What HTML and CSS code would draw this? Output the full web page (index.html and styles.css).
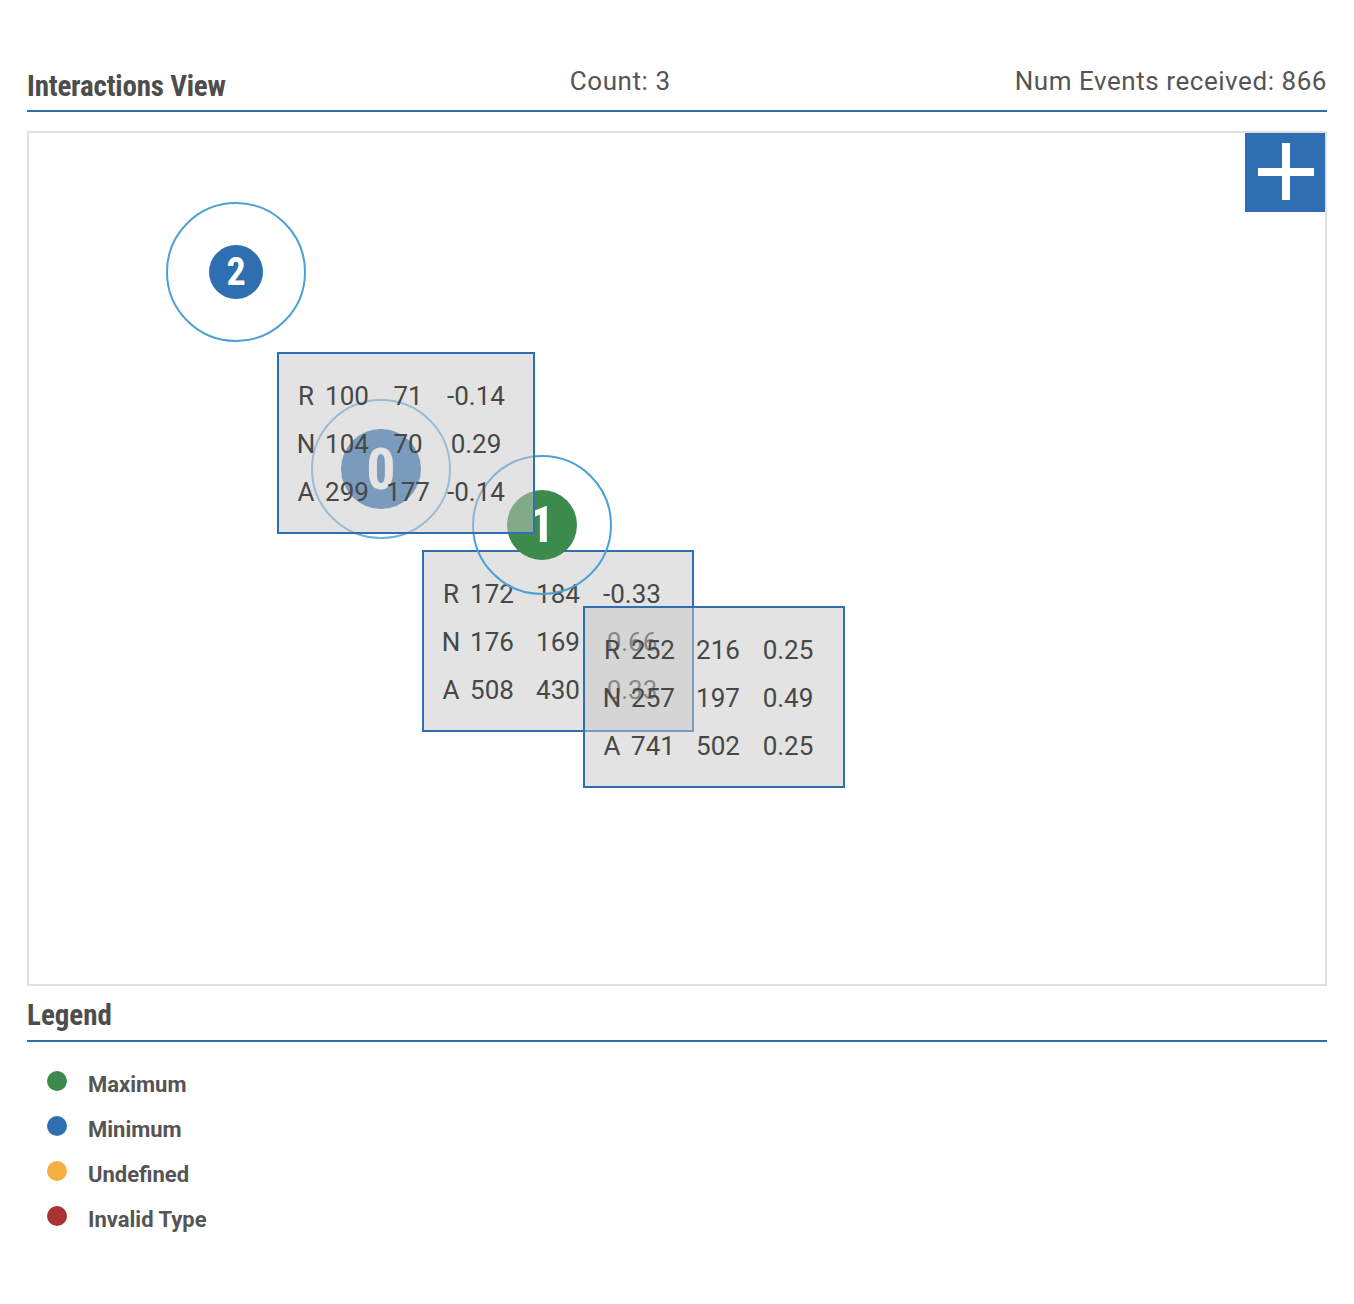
FILE: index.html
```html
<!DOCTYPE html>
<html>
<head>
<meta charset="utf-8">
<link rel="stylesheet" href="styles.css">
</head>
<body>
<div class="page">
  <div class="header">
    <h1 class="title">Interactions View</h1>
    <div class="count">Count: 3</div>
    <div class="events">Num Events received: 866</div>
  </div>

  <div class="canvas">
    <button class="add-btn" aria-label="add">
      <svg width="80" height="79" viewBox="0 0 80 79">
        <rect x="37" y="10" width="8" height="57" fill="#fff"/>
        <rect x="13" y="35" width="56" height="8" fill="#fff"/>
      </svg>
    </button>

    <div class="ring ring-2"></div>
    <div class="dot dot-2">2</div>

    <div class="panel panel-1">
      <span>R</span><span>172</span><span>184</span><span>-0.33</span>
      <span>N</span><span>176</span><span>169</span><span>0.66</span>
      <span>A</span><span>508</span><span>430</span><span>0.33</span>
    </div>

    <div class="ring ring-1"></div>
    <div class="dot dot-1">1</div>

    <div class="ring ring-0"></div>
    <div class="dot dot-0">0</div>

    <div class="panel panel-0">
      <span>R</span><span>100</span><span>71</span><span>-0.14</span>
      <span>N</span><span>104</span><span>70</span><span>0.29</span>
      <span>A</span><span>299</span><span>177</span><span>-0.14</span>
    </div>

    <div class="panel panel-2">
      <span>R</span><span>252</span><span>216</span><span>0.25</span>
      <span>N</span><span>257</span><span>197</span><span>0.49</span>
      <span>A</span><span>741</span><span>502</span><span>0.25</span>
    </div>
  </div>

  <div class="legend-head">
    <h2 class="legend-title">Legend</h2>
  </div>
  <ul class="legend">
    <li><span class="swatch swatch-max"></span>Maximum</li>
    <li><span class="swatch swatch-min"></span>Minimum</li>
    <li><span class="swatch swatch-undef"></span>Undefined</li>
    <li><span class="swatch swatch-invalid"></span>Invalid Type</li>
  </ul>
</div>
</body>
</html>
```
FILE: styles.css
```css
* { box-sizing: border-box; }
body {
  margin: 0;
  background: #fff;
  font-family: Roboto, "Liberation Sans", sans-serif;
  color: #4a4a4a;
}
.page {
  width: 1354px;
  padding: 0 27px;
}
.header {
  display: flex;
  justify-content: space-between;
  align-items: flex-end;
  padding-top: 66px;
  padding-bottom: 6px;
  border-bottom: 2px solid #2f6eb0;
}
.title, .legend-title {
  margin: 0;
  font-family: "Roboto Condensed", "Liberation Sans Narrow", "DejaVu Sans Condensed", Roboto, sans-serif;
  font-stretch: condensed;
  font-weight: bold;
  font-size: 29px;
  color: #4d4d4d;
  line-height: 36px;
}
.title { letter-spacing: -0.2px; }
.count, .events {
  font-size: 26px;
  letter-spacing: 0.55px;
  color: #555;
  line-height: 30px;
  margin-bottom: 8px;
}

.canvas {
  position: relative;
  margin-top: 19px;
  height: 855px;
  border: 2px solid #e0e0e0;
}
.add-btn {
  position: absolute;
  top: 0;
  right: 0;
  width: 80px;
  height: 79px;
  padding: 0;
  border: 0;
  background: #2f6eb0;
  display: block;
}
.add-btn svg { display: block; }

.ring {
  position: absolute;
  width: 140px;
  height: 140px;
  border: 2px solid #4ca0da;
  border-radius: 50%;
}
.ring-2 { left: 137px; top: 69px; }
.ring-0 { left: 282px; top: 266px; border-color: #6eb0de; }
.ring-1 { left: 443px; top: 322px; }

.dot {
  position: absolute;
  border-radius: 50%;
  color: #fff;
  font-weight: bold;
  display: flex;
  align-items: center;
  justify-content: center;
  font-family: "Roboto Condensed", "Liberation Sans Narrow", "DejaVu Sans Condensed", Roboto, sans-serif;
  font-stretch: condensed;
}
.dot-2 {
  left: 180px; top: 112px;
  width: 54px; height: 54px;
  background: #2f6eb0;
  font-size: 38px;
}
.dot-0 {
  left: 312px; top: 296px;
  width: 80px; height: 80px;
  background: #2f6eb0;
  font-size: 58px;
}
.dot-1 {
  left: 478px; top: 357px;
  width: 70px; height: 70px;
  background: #3c8a4c;
  font-size: 50px;
}

.panel {
  position: absolute;
  height: 182px;
  border: 2px solid #2f6eb0;
  background: rgba(200, 200, 200, 0.5);
  display: grid;
  grid-auto-rows: 48px;
  align-content: start;
  padding: 18px 0 0 9px;
  font-size: 26px;
  color: #474747;
}
.panel span {
  text-align: center;
  line-height: 48px;
  white-space: nowrap;
}
.panel-0 { left: 248px; top: 219px; width: 258px; grid-template-columns: 36px 46px 76px 60px; }
.panel-1 { left: 393px; top: 417px; width: 272px; grid-template-columns: 36px 46px 86px 62px; }
.panel-2 { left: 554px; top: 473px; width: 262px; grid-template-columns: 36px 46px 84px 56px; }

.legend-head {
  border-bottom: 2px solid #2f6eb0;
  padding-top: 11px;
  padding-bottom: 7px;
}
.legend {
  list-style: none;
  margin: 0;
  padding: 20px 0 0 20px;
}
.legend li {
  display: flex;
  align-items: center;
  height: 45px;
  font-size: 22px;
  font-weight: bold;
  color: #555;
}
.swatch {
  width: 20px;
  height: 20px;
  border-radius: 50%;
  margin-right: 21px;
  position: relative;
  top: -4px;
}
.swatch-max { background: #3c8a4c; }
.swatch-min { background: #2f6eb0; }
.swatch-undef { background: #f5b041; }
.swatch-invalid { background: #a93232; }
```
